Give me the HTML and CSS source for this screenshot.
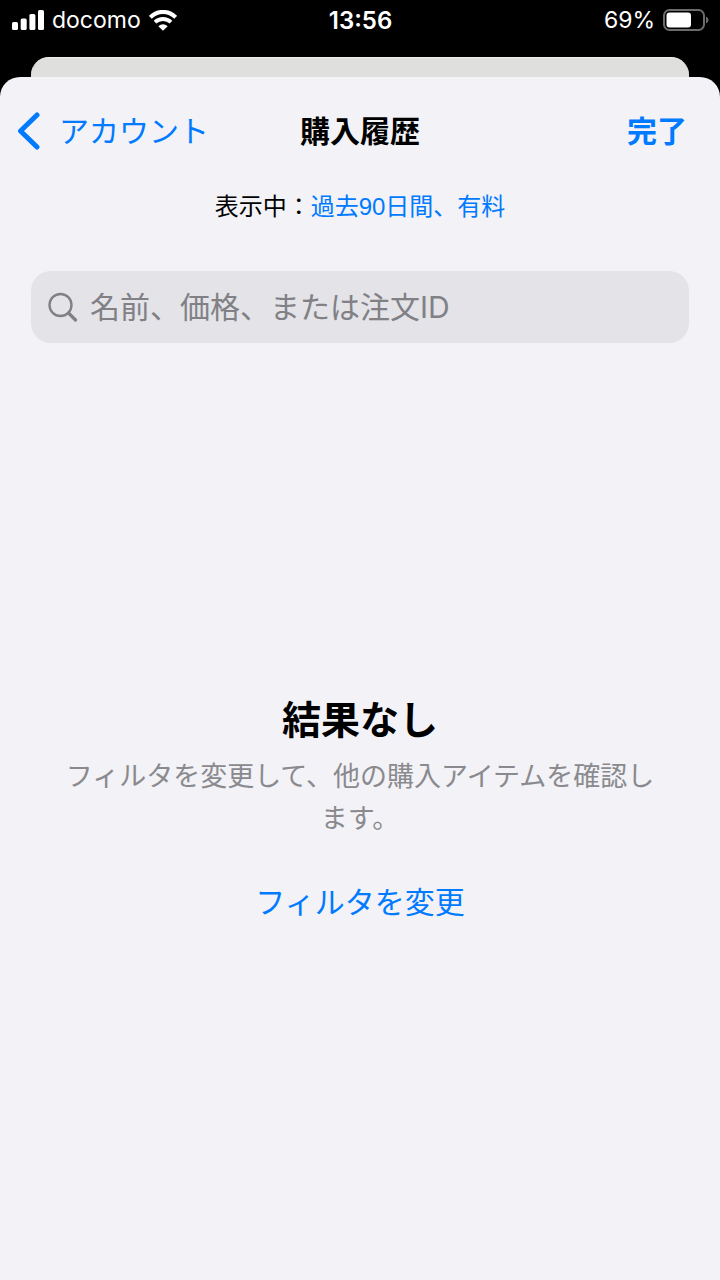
FILE: index.html
```html
<!DOCTYPE html>
<html lang="ja">
<head>
<meta charset="utf-8">
<meta name="viewport" content="width=device-width, initial-scale=1">
<title>購入履歴</title>
<link rel="stylesheet" href="styles.css">
</head>
<body>
<div class="status-bar">
  <div class="status-left">
    <svg class="signal" viewBox="0 0 32 21" width="32" height="21" fill="#fff" aria-hidden="true">
      <rect x="0" y="12" width="6" height="8" rx="1.5"/>
      <rect x="8.7" y="8.5" width="6" height="11.5" rx="1.5"/>
      <rect x="17.4" y="4" width="6" height="16" rx="1.5"/>
      <rect x="26" y="0" width="6" height="20" rx="1.5"/>
    </svg>
    <span>docomo</span>
    <svg class="wifi" viewBox="0 0 28 21" width="28" height="21" fill="none" stroke="#fff" aria-hidden="true">
      <path d="M1.3 7.3C8.5 .2 19.500 .2 26.700 7.300" stroke-width="4.200"/>
      <path d="M6 12.200C10.600 7.900 17.400 7.900 22 12.200" stroke-width="3.800"/>
      <path d="M14 20.800L9.300 16.200Q14 12.200 18.700 16.200Z" fill="#fff" stroke="none"/>
    </svg>
  </div>
  <time class="clock">13:56</time>
  <div class="status-right">
    <span>69%</span>
    <svg viewBox="0 0 46 22" width="46" height="22" aria-hidden="true">
      <rect x="1" y="1" width="40" height="20" rx="5.500" fill="none" stroke="#6b6b6b" stroke-width="2"/>
      <rect x="3.500" y="3.500" width="24.500" height="15" rx="3" fill="#fff"/>
      <path d="M43 7.500Q45.500 8.500 45.500 11T43 14.500Z" fill="#6b6b6b"/>
    </svg>
  </div>
</div>
<div class="back-card"></div>
<main class="sheet">
  <header class="nav">
    <button class="link-button back" type="button">
      <svg viewBox="0 0 24 38" width="24" height="38" fill="none" stroke="#007aff" stroke-width="5" stroke-linecap="round" stroke-linejoin="round" aria-hidden="true"><path d="M20 3L3.500 19L20 35"/></svg>
      <span>アカウント</span>
    </button>
    <h1 class="nav-title">購入履歴</h1>
    <button class="link-button done" type="button">完了</button>
  </header>
  <p class="filter">表示中：<a class="filter-link" href="#">過去90日間、有料</a></p>
  <label class="search">
    <svg viewBox="0 0 30 30" width="30" height="30" fill="none" stroke="#808085" aria-hidden="true">
      <circle cx="12.500" cy="13" r="11" stroke-width="2.400"/>
      <path d="M20.500 21L27.500 28" stroke-width="3.200" stroke-linecap="round"/>
    </svg>
    <input class="search-input" type="search" placeholder="名前、価格、または注文ID" aria-label="購入履歴を検索">
  </label>
  <section class="empty">
    <h2 class="empty-title">結果なし</h2>
    <p class="empty-text">フィルタを変更して、他の購入アイテムを確認します。</p>
    <button class="link-button" type="button">フィルタを変更</button>
  </section>
</main>
</body>
</html>
```
FILE: styles.css
```css
* {
  box-sizing: border-box;
}

body {
  margin: 0;
  min-height: 100vh;
  display: flex;
  flex-direction: column;
  background: #000;
  color: #000;
  font-family: Inter, "Noto Sans CJK JP", sans-serif;
}

h1, h2, p {
  margin: 0;
}

svg {
  display: block;
  flex: none;
}

.status-bar {
  display: grid;
  grid-template-columns: 1fr auto 1fr;
  align-items: center;
  height: 40px;
  padding: 0 11px 0 12px;
  color: #fff;
  font-size: 23px;
}

.status-left,
.status-right {
  display: flex;
  align-items: center;
  gap: 8px;
}

.status-right {
  justify-content: flex-end;
}

.clock {
  font-size: 24px;
  font-weight: 600;
}

.back-card {
  height: 20px;
  margin: 17px 31px 0;
  border-top: 1px solid #f0f0ee;
  border-radius: 18px 18px 0 0;
  background: #dfdfde;
}

.sheet {
  flex: 1;
  display: flex;
  flex-direction: column;
  border-radius: 20px 20px 0 0;
  background: #f2f2f7;
}

.nav {
  display: grid;
  grid-template-columns: 1fr auto 1fr;
  align-items: center;
  height: 108px;
  padding: 0 17px;
}

.nav-title {
  font-size: 30px;
  font-weight: 700;
  line-height: 44px;
}

.link-button {
  padding: 0;
  border: 0;
  background: none;
  color: #007aff;
  font: inherit;
  font-size: 30px;
  line-height: 44px;
  cursor: pointer;
}

.back {
  display: flex;
  align-items: center;
  justify-self: start;
  gap: 18px;
}

.done {
  justify-self: end;
  padding-right: 16px;
  font-weight: 700;
}

.filter {
  font-family: "Liberation Sans", "Noto Sans CJK JP", sans-serif;
  font-size: 24px;
  line-height: 44px;
  text-align: center;
}

.filter-link {
  color: #007aff;
  text-decoration: none;
}

.search {
  display: flex;
  align-items: center;
  gap: 12px;
  height: 72px;
  margin: 42px 31px 0;
  padding: 0 17px;
  border-radius: 20px;
  background: #e3e3e8;
}

.search-input {
  flex: 1;
  min-width: 0;
  padding: 0;
  border: 0;
  outline: none;
  background: none;
  font: inherit;
  font-size: 30px;
  line-height: 44px;
  appearance: none;
}

.search-input::placeholder {
  color: #808085;
  opacity: 1;
}

.empty {
  flex: 1;
  display: flex;
  flex-direction: column;
  align-items: center;
  justify-content: center;
  padding: 0 60px 8px;
  text-align: center;
}

.empty-title {
  font-size: 39px;
  font-weight: 700;
  line-height: 56px;
}

.empty-text {
  margin: 8px 0 40px;
  color: #8a8a8e;
  font-size: 27px;
  line-height: 42px;
}
```
